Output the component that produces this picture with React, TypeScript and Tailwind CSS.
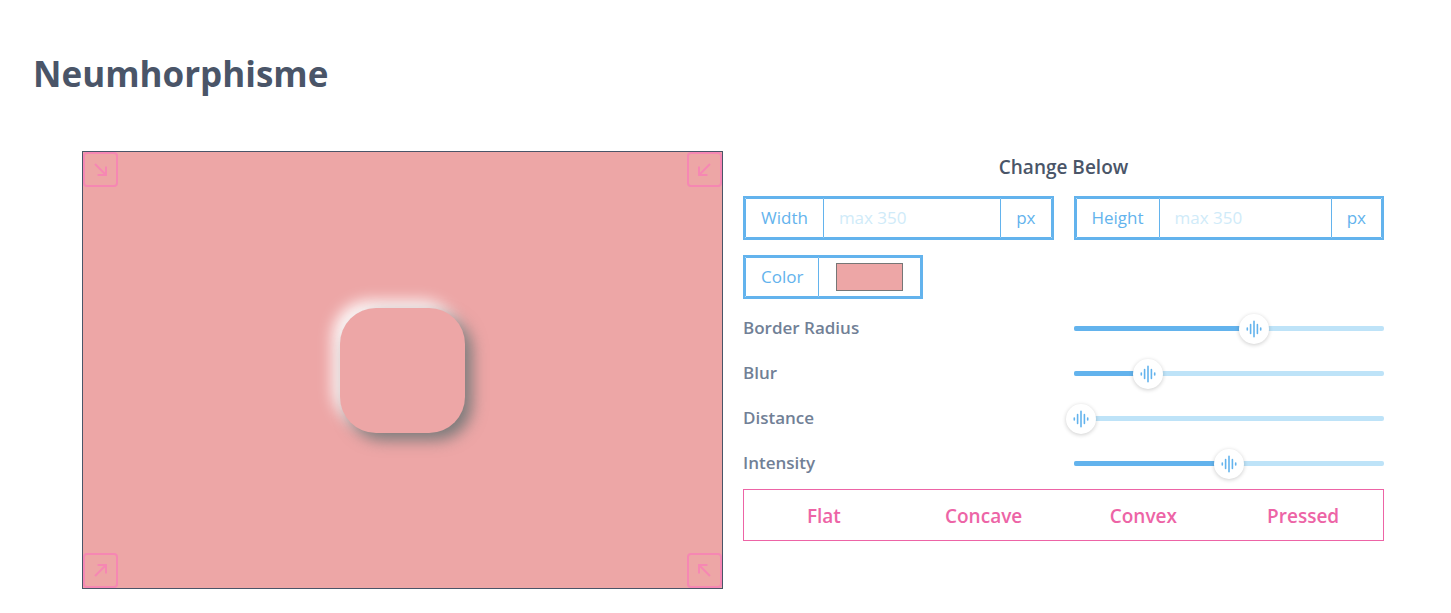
import { useState } from "react";
import type { ReactNode } from "react";

type Shape = "Flat" | "Concave" | "Convex" | "Pressed";
type Corner = "top-left" | "top-right" | "bottom-left" | "bottom-right";

const shapes: Shape[] = ["Flat", "Concave", "Convex", "Pressed"];

const arrowPaths: Record<Corner, string> = {
  "top-left": "M1 1L12 12M12 3.5V12H3.5",
  "top-right": "M12 1L1 12M1 3.5V12H9.5",
  "bottom-left": "M1 12L12 1M12 9.5V1H3.5",
  "bottom-right": "M12 12L1 1M1 9.5V1H9.5",
};

const lightDirection: Record<Corner, [number, number]> = {
  "top-left": [1, 1],
  "top-right": [-1, 1],
  "bottom-left": [1, -1],
  "bottom-right": [-1, -1],
};

function CornerButton({ corner, onSelect }: { corner: Corner; onSelect: (c: Corner) => void }) {
  return (
    <button
      type="button"
      aria-label={`Light from ${corner}`}
      onClick={() => onSelect(corner)}
      className="flex size-[35px] items-center justify-center rounded border-2 border-[#f687b3] text-[#f687b3]"
    >
      <svg width="13" height="13" viewBox="0 0 13 13" fill="none" stroke="currentColor" strokeWidth="2" className="overflow-visible">
        <path d={arrowPaths[corner]} />
      </svg>
    </button>
  );
}

function Addon({ children, side, htmlFor }: { children: ReactNode; side: "left" | "right"; htmlFor: string }) {
  return (
    <label
      htmlFor={htmlFor}
      className={`flex shrink-0 items-center border border-[#63b3ed] px-[15px] ${side === "left" ? "rounded-l-[1px]" : "rounded-r-[1px]"}`}
    >
      {children}
    </label>
  );
}

function SizeField({ id, label, value, onChange }: { id: string; label: string; value: string; onChange: (v: string) => void }) {
  return (
    <div className="flex h-11 min-w-0 flex-1 border-2 border-[#63b3ed] text-[17px] text-[#63b3ed]">
      <Addon side="left" htmlFor={id}>{label}</Addon>
      <input
        id={id}
        value={value}
        onChange={(e) => onChange(e.target.value)}
        placeholder="max 350"
        className="min-w-0 flex-1 border-y border-[#63b3ed] px-[15px] outline-none placeholder:text-[#d0ebf9]"
      />
      <Addon side="right" htmlFor={id}>px</Addon>
    </div>
  );
}

function SliderRow({ id, label, value, max, onChange }: { id: string; label: string; value: number; max: number; onChange: (v: number) => void }) {
  const percent = `${(value / max) * 100}%`;
  return (
    <div className="grid h-[45px] grid-cols-2 items-center gap-5">
      <label htmlFor={id} className="pb-0.5 text-[17px] font-semibold text-[#718096]">{label}</label>
      <div className="relative flex h-[30px] items-center">
        <div className="h-[5px] w-full overflow-hidden rounded-xs bg-[#bee3f8]">
          <div className="h-full bg-[#63b3ed]" style={{ width: percent }} />
        </div>
        <div
          className="absolute flex size-[30px] -translate-x-1/2 items-center justify-center rounded-full bg-white text-[#63b3ed] shadow-[0_1px_4px_rgba(0,0,0,0.2)]"
          style={{ left: percent }}
        >
          <svg width="16" height="18" viewBox="0 0 16 18" fill="none" stroke="currentColor" strokeLinecap="round" strokeWidth="1.6">
            <path d="M1.3 8v2M4.6 4.5v9M8 1.2v15.6M11.4 4.5v9M14.7 8v2" />
          </svg>
        </div>
        <input
          id={id}
          type="range"
          min={0}
          max={max}
          value={value}
          onChange={(e) => onChange(Number(e.target.value))}
          className="absolute inset-0 w-full cursor-pointer opacity-0"
        />
      </div>
    </div>
  );
}

export default function App() {
  const [width, setWidth] = useState("");
  const [height, setHeight] = useState("");
  const [color, setColor] = useState("#eda6a6");
  const [radius, setRadius] = useState(58);
  const [blur, setBlur] = useState(24);
  const [distance, setDistance] = useState(7);
  const [intensity, setIntensity] = useState(50);
  const [shape, setShape] = useState<Shape>("Flat");
  const [corner, setCorner] = useState<Corner>("top-left");

  const [dx, dy] = lightDirection[corner];
  const spread = Math.round((blur * 5) / 8);
  const gray = Math.round(244 - intensity * 2.44);
  const inset = shape === "Pressed" ? "inset " : "";
  const boxShadow =
    `${inset}${dx * distance}px ${dy * distance}px ${spread}px rgb(${gray} ${gray} ${gray}), ` +
    `${inset}${-dx * distance}px ${-dy * distance}px ${spread}px #ffffff`;
  const gradient =
    shape === "Concave"
      ? "linear-gradient(145deg, rgba(0,0,0,0.12), rgba(255,255,255,0.12))"
      : shape === "Convex"
        ? "linear-gradient(145deg, rgba(255,255,255,0.12), rgba(0,0,0,0.12))"
        : "none";

  return (
    <main className="min-h-screen bg-white pb-6 pt-[46px] font-['Open_Sans','Noto_Sans',sans-serif]">
      <h1 className="pl-[33px] text-[35px] font-bold leading-[56px] text-[#4a5568]">Neumhorphisme</h1>
      <div className="mt-[49px] grid grid-cols-2 gap-5 pl-[82px] pr-[67px]">
        <section
          aria-label="Preview"
          className="flex min-h-[438px] flex-col justify-between border border-[#4a5568]"
          style={{ backgroundColor: color }}
        >
          <div className="flex justify-between">
            <CornerButton corner="top-left" onSelect={setCorner} />
            <CornerButton corner="top-right" onSelect={setCorner} />
          </div>
          <div
            className="self-center"
            style={{
              width: Math.min(Number(width) || 125, 350),
              height: Math.min(Number(height) || 125, 350),
              borderRadius: Math.round(radius * 0.62),
              backgroundColor: color,
              backgroundImage: gradient,
              boxShadow,
            }}
          />
          <div className="flex justify-between">
            <CornerButton corner="bottom-left" onSelect={setCorner} />
            <CornerButton corner="bottom-right" onSelect={setCorner} />
          </div>
        </section>

        <section aria-label="Controls">
          <h2 className="text-center text-[19px] font-semibold leading-8 text-[#4a5568]">Change Below</h2>
          <div className="mt-[13px] flex gap-5">
            <SizeField id="width" label="Width" value={width} onChange={setWidth} />
            <SizeField id="height" label="Height" value={height} onChange={setHeight} />
          </div>
          <div className="mt-[15px] flex h-11 w-[180px] border-2 border-[#63b3ed] text-[17px] text-[#63b3ed]">
            <Addon side="left" htmlFor="color">Color</Addon>
            <div className="flex flex-1 items-center justify-center rounded-r-[1px] border-y border-r border-[#63b3ed]">
              <input
                id="color"
                type="color"
                value={color}
                onChange={(e) => setColor(e.target.value)}
                className="h-7 w-[67px] appearance-none p-0 [&::-webkit-color-swatch-wrapper]:p-0 [&::-webkit-color-swatch]:rounded-none [&::-webkit-color-swatch]:border [&::-webkit-color-swatch]:border-[#767676]"
              />
            </div>
          </div>
          <div className="mt-[7px]">
            <SliderRow id="radius" label="Border Radius" value={radius} max={100} onChange={setRadius} />
            <SliderRow id="blur" label="Blur" value={blur} max={100} onChange={setBlur} />
            <SliderRow id="distance" label="Distance" value={distance} max={310} onChange={setDistance} />
            <SliderRow id="intensity" label="Intensity" value={intensity} max={100} onChange={setIntensity} />
          </div>
          <div className="mt-[3px] grid h-[52px] grid-cols-4 border border-[#ed64a6]">
            {shapes.map((name) => (
              <button
                key={name}
                type="button"
                aria-pressed={shape === name}
                onClick={() => setShape(name)}
                className="pt-0.5 text-[19px] font-semibold text-[#ed64a6]"
              >
                {name}
              </button>
            ))}
          </div>
        </section>
      </div>
    </main>
  );
}
